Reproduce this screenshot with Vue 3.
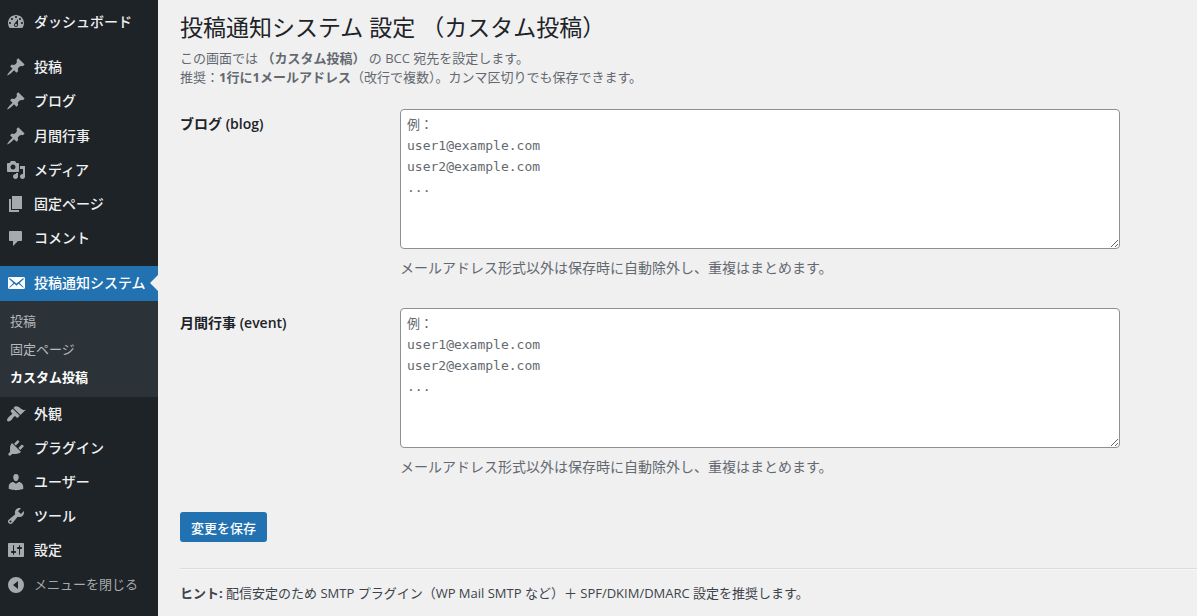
<script setup>
import { ref } from 'vue'

const icons = {
  dashboard: 'M3.76 16h12.48c1.1-1.37 1.76-3.11 1.76-5 0-4.42-3.58-8-8-8s-8 3.58-8 8c0 1.89.66 3.63 1.76 5zM10 4c.55 0 1 .45 1 1s-.45 1-1 1-1-.45-1-1 .45-1 1-1zM6 6c.55 0 1 .45 1 1s-.45 1-1 1-1-.45-1-1 .45-1 1-1zm8 0c.55 0 1 .45 1 1s-.45 1-1 1-1-.45-1-1 .45-1 1-1zm-5.37 5.55L12 7v6c0 1.1-.9 2-2 2s-2-.9-2-2c0-.57.24-1.08.63-1.45zM4 10c.55 0 1 .45 1 1s-.45 1-1 1-1-.45-1-1 .45-1 1-1zm12 0c.55 0 1 .45 1 1s-.45 1-1 1-1-.45-1-1 .45-1 1-1zm-5 3c0-.55-.45-1-1-1s-1 .45-1 1 .45 1 1 1 1-.45 1-1z',
  pin: 'M10.44 3.02l1.82-1.82 6.36 6.35-1.83 1.82c-1.05-.68-2.48-.57-3.41.36l-.75.75c-.92.93-1.04 2.35-.35 3.41l-1.83 1.82-2.41-2.41-2.8 2.79c-.42.42-3.38 2.71-3.8 2.29s1.86-3.39 2.28-3.81l2.79-2.79L4.1 9.36l1.83-1.82c1.05.69 2.48.57 3.4-.36l.75-.75c.93-.92 1.05-2.35.36-3.41z',
  media: 'M13 11V4c0-.55-.45-1-1-1h-1.67L9 1H5L3.67 3H2c-.55 0-1 .45-1 1v7c0 .55.45 1 1 1h10c.55 0 1-.45 1-1zM7 4.5c1.38 0 2.5 1.12 2.5 2.5S8.38 9.5 7 9.5 4.5 8.38 4.5 7 5.62 4.5 7 4.5zM14 6h5v10.5c0 1.38-1.12 2.5-2.5 2.5S14 17.88 14 16.5s1.12-2.5 2.5-2.5c.17 0 .34.02.5.05V9h-3V6zm-4 8.05V13h2v3.5c0 1.38-1.12 2.5-2.5 2.5S7 17.88 7 16.5 8.12 14 9.5 14c.17 0 .34.02.5.05z',
  page: 'M6 15V2h10v13H6zm-1 1h8v2H3V5h2v11z',
  comment: 'M4 3h11c.55 0 1 .45 1 1v8c0 .55-.45 1-1 1h-3l-5 5v-5H4c-.55 0-1-.45-1-1V4c0-.55.45-1 1-1z',
  mail: 'M19 14.5v-9c0-.83-.67-1.5-1.5-1.5H3.49c-.83 0-1.5.67-1.5 1.5v9c0 .83.67 1.5 1.5 1.5H17.5c.83 0 1.5-.67 1.5-1.5zm-1.31-9.11c.33.33.15.67-.03.84L13.6 9.95l3.9 4.06c.12.14.2.36.06.51-.13.16-.43.15-.56.05l-4.37-3.73-2.14 1.95-2.13-1.95-4.37 3.73c-.13.1-.43.11-.56-.05-.14-.15-.06-.37.06-.51l3.9-4.06-4.06-3.72c-.18-.17-.36-.51-.03-.84s.67-.17.95.07l6.24 5.04 6.25-5.04c.28-.24.62-.4.95-.07z',
  brush: 'M14.48 11.06L7.41 3.99l1.5-1.5c.5-.56 2.3-.47 3.51.32 1.21.8 1.43 1.28 2.91 2.1 1.18.64 2.45 1.26 4.45.85zm-.71.71L6.7 4.7 4.93 6.47c-.39.39-.39 1.02 0 1.41l1.06 1.06c.39.39.39 1.03 0 1.42-.6.6-1.43 1.11-2.21 1.69-.35.26-.7.53-1.01.84C1.43 14.23.4 16.08 1.4 17.07c.99 1 2.84-.03 4.18-1.36.31-.31.58-.66.85-1.02.57-.78 1.08-1.61 1.69-2.21.39-.39 1.02-.39 1.41 0l1.06 1.06c.39.39 1.02.39 1.41 0z',
  plug: 'M13.11 4.36L9.87 7.6 8 5.73l3.24-3.24c.35-.34 1.05-.2 1.56.32.52.51.66 1.21.31 1.55zm-8 1.77l.91-1.12 9.01 9.01-1.19.84c-.71.71-2.63 1.16-3.82 1.16H6.14L4.9 17.26c-.59.59-1.54.59-2.12 0-.59-.58-.59-1.53 0-2.12l1.24-1.24v-3.88c0-1.13.4-3.19 1.09-3.89zm7.26 3.97l3.24-3.24c.34-.35 1.04-.21 1.55.31.52.51.66 1.21.31 1.55l-3.24 3.25z',
  user: 'M10 9.25c-2.27 0-2.73-3.44-2.73-3.44C7 4.02 7.82 2 9.97 2c2.16 0 2.98 2.02 2.71 3.81 0 0-.41 3.44-2.68 3.44zm0 2.57L12.72 10c2.39 0 4.52 2.33 4.52 4.53v2.49s-3.65 1.13-7.24 1.13c-3.65 0-7.24-1.13-7.24-1.13v-2.49c0-2.25 1.94-4.48 4.47-4.48z',
  wrench: 'M16.68 9.77c-1.34 1.34-3.3 1.67-4.95.99l-5.41 6.52c-.99.99-2.59.99-3.58 0s-.99-2.59 0-3.57l6.52-5.42c-.68-1.65-.35-3.61.99-4.95 1.28-1.28 3.12-1.62 4.72-1.06l-2.89 2.89 2.82 2.82 2.86-2.87c.53 1.58.18 3.39-1.08 4.65zM3.81 16.21c.4.39 1.04.39 1.43 0 .4-.4.4-1.04 0-1.43-.39-.4-1.03-.4-1.43 0-.39.39-.39 1.03 0 1.43z',
  sliders: 'M18 16V4c0-.55-.45-1-1-1H3c-.55 0-1 .45-1 1v12c0 .55.45 1 1 1h14c.55 0 1-.45 1-1zM8 11h1c.55 0 1 .45 1 1s-.45 1-1 1H8v1.5c0 .28-.22.5-.5.5s-.5-.22-.5-.5V13H6c-.55 0-1-.45-1-1s.45-1 1-1h1V5.5c0-.28.22-.5.5-.5s.5.22.5.5V11zm5-2h-1c-.55 0-1-.45-1-1s.45-1 1-1h1V5.5c0-.28.22-.5.5-.5s.5.22.5.5V7h1c.55 0 1 .45 1 1s-.45 1-1 1h-1v5.5c0 .28-.22.5-.5.5s-.5-.22-.5-.5V9z',
  collapse: 'M10 2a8 8 0 1 1 0 16 8 8 0 0 1 0-16zm2 4l-5 4 5 4z'
}

const menu = [
  { label: 'ダッシュボード', icon: 'dashboard' },
  { label: '投稿', icon: 'pin', gap: true },
  { label: 'ブログ', icon: 'pin' },
  { label: '月間行事', icon: 'pin' },
  { label: 'メディア', icon: 'media' },
  { label: '固定ページ', icon: 'page' },
  { label: 'コメント', icon: 'comment' },
  {
    label: '投稿通知システム',
    icon: 'mail',
    gap: true,
    current: true,
    children: ['投稿', '固定ページ', 'カスタム投稿']
  },
  { label: '外観', icon: 'brush' },
  { label: 'プラグイン', icon: 'plug' },
  { label: 'ユーザー', icon: 'user' },
  { label: 'ツール', icon: 'wrench' },
  { label: '設定', icon: 'sliders' }
]

const placeholder = '例：\nuser1@example.com\nuser2@example.com\n...'
const fields = ref([
  { id: 'blog', label: 'ブログ (blog)', value: '' },
  { id: 'event', label: '月間行事 (event)', value: '' }
])
</script>

<template>
  <div class="admin">
    <nav class="sidebar" aria-label="メインメニュー">
      <ul class="menu">
        <li v-for="item in menu" :key="item.label" :class="{ gap: item.gap }">
          <a href="#" class="item" :class="{ current: item.current }">
            <svg class="icon" viewBox="0 0 20 20" aria-hidden="true"><path fill-rule="evenodd" :d="icons[item.icon]" /></svg>
            <span>{{ item.label }}</span>
          </a>
          <ul v-if="item.children" class="submenu">
            <li v-for="(child, i) in item.children" :key="child">
              <a href="#" :class="{ selected: i === 2 }">{{ child }}</a>
            </li>
          </ul>
        </li>
      </ul>
      <button type="button" class="item collapse">
        <svg class="icon" viewBox="0 0 20 20" aria-hidden="true"><path fill-rule="evenodd" :d="icons.collapse" /></svg>
        <span>メニューを閉じる</span>
      </button>
    </nav>

    <main class="content">
      <h1>投稿通知システム 設定 （カスタム投稿）</h1>
      <p class="intro">
        この画面では <strong>（カスタム投稿）</strong> の BCC 宛先を設定します。<br />
        推奨：<strong>1行に1メールアドレス</strong>（改行で複数）。カンマ区切りでも保存できます。
      </p>
      <form @submit.prevent>
        <div v-for="field in fields" :key="field.id" class="field">
          <label :for="field.id">{{ field.label }}</label>
          <div>
            <textarea :id="field.id" v-model="field.value" :placeholder="placeholder" :aria-describedby="field.id + '-help'"></textarea>
            <p :id="field.id + '-help'" class="help">メールアドレス形式以外は保存時に自動除外し、重複はまとめます。</p>
          </div>
        </div>
        <button type="submit" class="save">変更を保存</button>
      </form>
      <hr />
      <p class="hint"><strong>ヒント:</strong> 配信安定のため SMTP プラグイン（WP Mail SMTP など）＋ SPF/DKIM/DMARC 設定を推奨します。</p>
    </main>
  </div>
</template>

<style>
body {
  background: #f0f0f1;
}
</style>

<style scoped>
.admin {
  display: flex;
  min-height: 100vh;
  color: #3c434a;
  font-family: "Open Sans", "Noto Sans CJK JP", sans-serif;
  font-size: 13px;
  line-height: 19px;
}
ul {
  margin: 0;
  padding: 0;
  list-style: none;
}
.sidebar {
  box-sizing: border-box;
  flex: 0 0 158px;
  padding-top: 5px;
  background: #1d2327;
}
.gap {
  margin-top: 11px;
}
.item {
  position: relative;
  display: flex;
  align-items: flex-start;
  gap: 8px;
  padding: 7px 0 9px 6px;
  color: #f0f0f1;
  font-size: 14px;
  font-weight: 500;
  line-height: 1.3;
  text-decoration: none;
  white-space: nowrap;
}
.item span {
  font-family: "Noto Sans CJK JP", sans-serif;
}
.icon {
  flex: none;
  width: 20px;
  height: 20px;
  margin-bottom: -2px;
  fill: #a7aaad;
}
.current {
  background: #2271b1;
  color: #fff;
}
.current .icon {
  fill: #fff;
}
.current::after {
  content: "";
  position: absolute;
  top: 50%;
  right: 0;
  margin-top: -8px;
  border: 8px solid transparent;
  border-left-width: 0;
  border-right-color: #f0f0f1;
}
.submenu {
  padding: 6px 0;
  background: #2c3338;
}
.submenu a {
  display: block;
  padding: 5px 10px;
  color: #b4b9be;
  line-height: 18px;
  text-decoration: none;
}
.submenu .selected {
  color: #fff;
  font-weight: 700;
}
.collapse {
  align-items: center;
  width: 100%;
  padding: 8px 0 8px 6px;
  border: 0;
  background: none;
  color: #a7aaad;
  font-size: 13px;
  font-weight: 400;
}
.content {
  flex: 1;
  min-width: 0;
  padding: 12px 0 12px 22px;
}
h1 {
  margin: 0;
  color: #1d2327;
  font-size: 23px;
  font-weight: 400;
  line-height: 30px;
}
.intro {
  margin: 7px 0 22px;
  color: #646970;
}
.field {
  display: grid;
  grid-template-columns: 220px minmax(0, 720px);
  margin-bottom: 30px;
}
.field label {
  padding-top: 5px;
  color: #1d2327;
  font-size: 14px;
  font-weight: 600;
}
textarea {
  display: block;
  box-sizing: border-box;
  width: 100%;
  height: 140px;
  margin: 0;
  padding: 4px 6px;
  border: 1px solid #8c8f94;
  border-radius: 4px;
  background: #fff;
  color: #2c3338;
  font-family: "DejaVu Sans Mono", "Noto Sans CJK JP", monospace;
  font-size: 13px;
  line-height: 21px;
}
textarea::placeholder {
  color: #646970;
  opacity: 1;
}
.help {
  margin: 9px 0 0;
  color: #646970;
  font-size: 14px;
  line-height: 20px;
}
.save {
  height: 30px;
  margin-top: 5px;
  padding: 0 11px;
  border: 0;
  border-radius: 3px;
  background: #2271b1;
  color: #fff;
  font-family: inherit;
  font-size: 13px;
  font-weight: 500;
}
hr {
  margin: 26px 0 0;
  border: 0;
  border-top: 1px solid #dcdcde;
  border-bottom: 1px solid #f6f7f7;
}
.hint {
  margin: 14px 0 0;
}
</style>
